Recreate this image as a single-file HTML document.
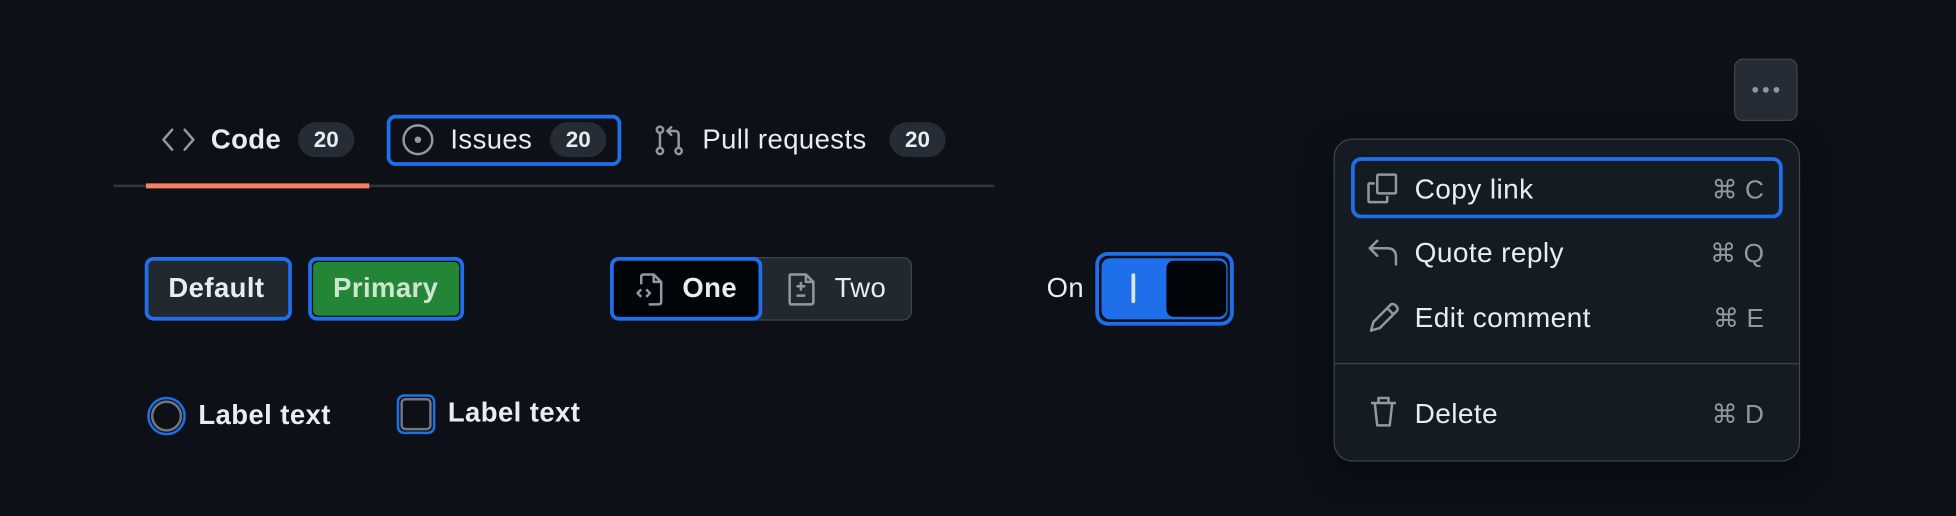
<!DOCTYPE html>
<html><head><meta charset="utf-8"><style>
html,body{margin:0;padding:0;background:#0d1117;width:1956px;height:516px;overflow:hidden}
#w{position:absolute;left:0;top:0;width:1568px;height:414px;transform:scale(1.2475);transform-origin:0 0;font-family:"Liberation Sans",sans-serif;color:#e6edf3}
.a{position:absolute}
.t{font-size:22px;line-height:1;letter-spacing:.35px;margin-top:-1px}
.pill{position:absolute;height:28px;border-radius:14px;background:#262c36;font-size:18px;font-weight:bold;display:flex;align-items:center;justify-content:center}
.ring{position:absolute;border:3px solid #1f6feb;box-sizing:border-box}
svg{position:absolute;overflow:visible}
.mi{position:absolute;left:1134px;font-size:22.5px;letter-spacing:.3px;margin-top:-1px}
.sc{position:absolute;right:154px;font-size:21px;color:#9198a1}
</style></head><body><div id="w">
<!-- tabs -->
<svg style="left:130px;top:101px" width="26" height="22" viewBox="0 0 26 22" fill="none" stroke="#9198a1" stroke-width="2" stroke-linecap="round" stroke-linejoin="round"><path d="M8 3 1 11l7 8M18 3l7 8-7 8"/></svg>
<div class="a t" style="left:169px;top:102px;font-weight:bold">Code</div>
<div class="pill" style="left:239px;top:98px;width:45px">20</div>
<div class="ring" style="left:310px;top:92px;width:188px;height:41px;border-radius:7px"></div>
<svg style="left:322px;top:99px" width="26" height="26" viewBox="0 0 26 26" fill="none" stroke="#9198a1" stroke-width="2"><circle cx="13" cy="13" r="11.5"/><circle cx="13" cy="13" r="1.6" fill="#9198a1"/></svg>
<div class="a t" style="left:361px;top:102px">Issues</div>
<div class="pill" style="left:441px;top:98px;width:45px">20</div>
<svg style="left:525px;top:100px" width="24" height="26" viewBox="0 0 24 26" fill="none" stroke="#9198a1" stroke-width="2" stroke-linecap="round"><circle cx="4" cy="4" r="2.5"/><circle cx="4" cy="21" r="2.5"/><circle cx="19" cy="21" r="2.5"/><path d="M4 7v11M19 18V8q0-3-3-3h-5M13 2l-3 3 3 3"/></svg>
<div class="a t" style="left:563px;top:102px">Pull requests</div>
<div class="pill" style="left:713px;top:98px;width:45px">20</div>
<div class="a" style="left:91px;top:148px;width:706px;height:2px;background:#30363d"></div>
<div class="a" style="left:117px;top:147px;width:179px;height:4px;background:#f78166"></div>
<!-- buttons -->
<div class="ring" style="left:116px;top:206px;width:118px;height:51px;border-radius:7px;background:#212830;border-color:#1f6feb"></div>
<div class="a t" style="left:135px;top:221px;font-weight:bold">Default</div>
<div class="ring" style="left:247px;top:206px;width:125px;height:51px;border-radius:7px"></div>
<div class="a" style="left:251px;top:210px;width:117px;height:43px;border-radius:4px;background:#238636"></div>
<div class="a t" style="left:267px;top:221px;font-weight:bold;color:#cfe5d2">Primary</div>
<div class="a" style="left:489px;top:206px;width:242px;height:51px;border-radius:7px;background:#212830;border:1px solid #3d444d;box-sizing:border-box"></div>
<div class="ring" style="left:489px;top:206px;width:122px;height:51px;border-radius:7px;background:#010409"></div>
<svg style="left:508px;top:218px" width="24" height="27" viewBox="0 0 24 27" fill="none" stroke="#9198a1" stroke-width="2" stroke-linejoin="round"><path d="M8 2h8l6 6v16q0 2-2 2h-8M16 2v6h6M8 2q-2 0-2 2v6M6 14l-3 3 3 3M10 14l3 3-3 3"/></svg>
<div class="a t" style="left:547px;top:221px;font-weight:bold">One</div>
<svg style="left:631px;top:218px" width="24" height="27" viewBox="0 0 24 27" fill="none" stroke="#9198a1" stroke-width="2" stroke-linejoin="round"><path d="M3 2h12l6 6v16q0 2-2 2H3q-1 0-1-2V3q0-1 1-1zM15 2v6h6M11 8v7M7.5 11.5h7M7.5 19h7"/></svg>
<div class="a t" style="left:669px;top:221px">Two</div>
<!-- toggle -->
<div class="a t" style="left:839px;top:221px">On</div>
<div class="ring" style="left:878px;top:202px;width:111px;height:59px;border-radius:10px;background:#0d1117"></div>
<div class="a" style="left:883px;top:207px;width:101px;height:49px;border-radius:7px;background:#1f6feb"></div>
<div class="a" style="left:907px;top:219px;width:3px;height:24px;border-radius:2px;background:#dbe6f5"></div>
<div class="a" style="left:935px;top:209px;width:48px;height:45px;border-radius:6px;background:#010409"></div>
<!-- radio / checkbox -->
<div class="a" style="left:118px;top:318px;width:31px;height:31px;border-radius:50%;border:2px solid #1f6feb;box-sizing:border-box"></div>
<div class="a" style="left:121px;top:321px;width:25px;height:25px;border-radius:50%;border:2px solid #6e7681;box-sizing:border-box"></div>
<div class="a t" style="left:159px;top:323px;font-weight:bold">Label text</div>
<div class="a" style="left:318px;top:316px;width:31px;height:32px;border-radius:6px;border:2px solid #1f6feb;box-sizing:border-box"></div>
<div class="a" style="left:321px;top:319px;width:25px;height:26px;border-radius:4px;border:2px solid #6e7681;box-sizing:border-box"></div>
<div class="a t" style="left:359px;top:321px;font-weight:bold">Label text</div>
<!-- kebab -->
<div class="a" style="left:1390px;top:47px;width:51px;height:50px;border-radius:7px;background:#262c36;border:1px solid #3d444d;box-sizing:border-box"></div>
<svg style="left:1404px;top:69px" width="24" height="6" viewBox="0 0 24 6" fill="#9198a1"><circle cx="3" cy="3" r="2.3"/><circle cx="11.5" cy="3" r="2.3"/><circle cx="20" cy="3" r="2.3"/></svg>
<!-- menu -->
<div class="a" style="left:1069px;top:111px;width:374px;height:259px;border-radius:15px;background:#151b23;border:1px solid #3d444d;box-sizing:border-box;box-shadow:0 8px 24px rgba(1,4,9,.6)"></div>
<div class="ring" style="left:1083px;top:126px;width:346px;height:49px;border-radius:8px"></div>
<svg style="left:1095px;top:138px" width="26" height="26" viewBox="0 0 26 26" fill="none" stroke="#9198a1" stroke-width="2" stroke-linejoin="round"><path d="M7 9H3q-1 0-1 1v13q0 1 1 1h13q1 0 1-1v-4"/><rect x="9" y="2" width="15" height="15" rx="1"/></svg>
<div class="mi" style="top:140px">Copy link</div>
<div class="sc" style="top:140px">⌘ C</div>
<svg style="left:1097px;top:191px" width="24" height="24" viewBox="0 0 24 24" fill="none" stroke="#9198a1" stroke-width="2" stroke-linecap="round" stroke-linejoin="round"><path d="M7 2 1 8l6 6M1 8h14q7 0 7 7v6"/></svg>
<div class="mi" style="top:191px">Quote reply</div>
<div class="sc" style="top:191px">⌘ Q</div>
<svg style="left:1097px;top:242px" width="25" height="25" viewBox="0 0 25 25" fill="none" stroke="#9198a1" stroke-width="2" stroke-linejoin="round"><path d="M18 2q2-1 4 1t1 4L9 21l-7 2 2-7zM15 5l5 5"/></svg>
<div class="mi" style="top:243px">Edit comment</div>
<div class="sc" style="top:243px">⌘ E</div>
<div class="a" style="left:1070px;top:291px;width:372px;height:1px;background:#3d444d"></div>
<svg style="left:1098px;top:317px" width="22" height="26" viewBox="0 0 22 26" fill="none" stroke="#9198a1" stroke-width="2" stroke-linejoin="round"><path d="M1 6h20M7 6V2h8v4M4 6l2 18h10l2-18"/></svg>
<div class="mi" style="top:320px">Delete</div>
<div class="sc" style="top:320px">⌘ D</div>
</div></body></html>
